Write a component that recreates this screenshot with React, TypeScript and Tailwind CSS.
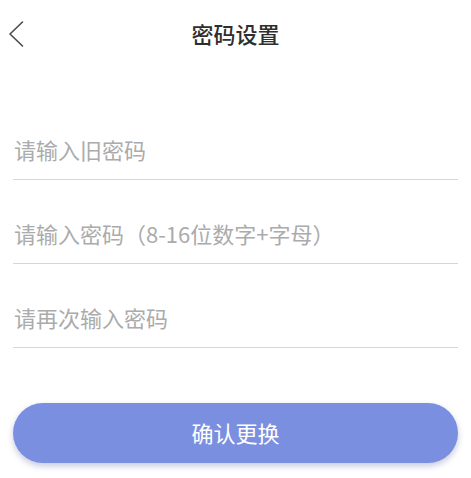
import { useState } from "react";

const fields = [
  { key: "old", placeholder: "请输入旧密码" },
  { key: "new", placeholder: "请输入密码（8-16位数字+字母）" },
  { key: "again", placeholder: "请再次输入密码" },
];

const BackIcon = () => (
  <svg width="18" height="28" viewBox="0 0 18 28" fill="none">
    <path d="M15.5 2 L3 14 L15.5 26" stroke="#4a4a4a" strokeWidth="1.6" strokeLinecap="round" strokeLinejoin="round" />
  </svg>
);

export default function App() {
  const [values, setValues] = useState<Record<string, string>>({});

  return (
    <div
      className="w-[471px] h-[478px] bg-white overflow-hidden"
      style={{ fontFamily: '"Noto Sans CJK SC", "Noto Sans", sans-serif' }}
    >
      {/* header */}
      <div className="grid grid-cols-[1fr_auto_1fr] items-center h-[66px]">
        <button className="justify-self-start pl-[7px] pt-[2px]">
          <BackIcon />
        </button>
        <h1 className="text-[22px] leading-none font-medium text-[#2e2e2e]">密码设置</h1>
        <div />
      </div>

      {/* form */}
      <div className="mt-[30px] mx-[13px]">
        {fields.map((f) => (
          <div key={f.key} className="h-[84px] flex items-end pb-[14px] border-b border-[#d6d6d6]">
            <input
              type="password"
              value={values[f.key] ?? ""}
              onChange={(e) => setValues({ ...values, [f.key]: e.target.value })}
              placeholder={f.placeholder}
              className="w-full h-[32px] pl-px text-[22px] text-[#333] placeholder:text-[#ababab] outline-none bg-transparent"
            />
          </div>
        ))}
      </div>

      <div className="mx-[13px] mt-[55px]">
        <button className="w-full h-[60px] pb-[2px] rounded-full bg-[#7b8fe0] text-white text-[22px] shadow-[0_3px_6px_rgba(90,100,160,0.35)]">
          确认更换
        </button>
      </div>
    </div>
  );
}
